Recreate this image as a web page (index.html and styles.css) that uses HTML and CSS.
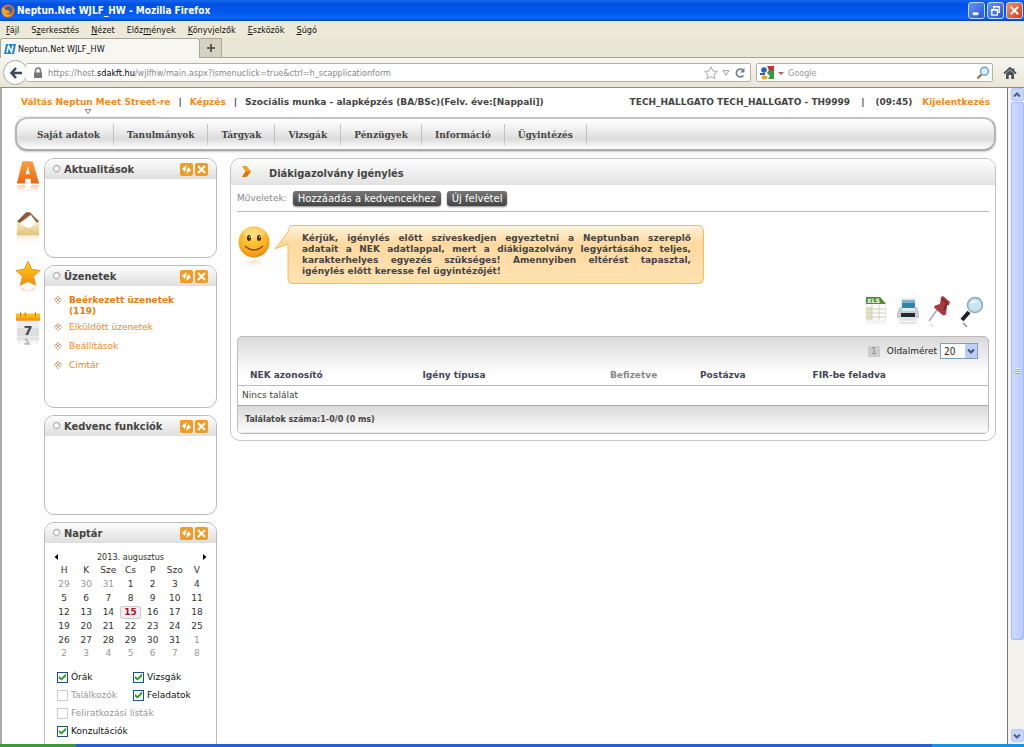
FILE: index.html
```html
<!DOCTYPE html>
<html lang="hu">
<head>
<meta charset="utf-8">
<title>Neptun.Net WJLF_HW - Mozilla Firefox</title>
<link rel="stylesheet" href="styles.css">
</head>
<body>
<svg class="defs" aria-hidden="true">
  <defs>
    <linearGradient id="orange" x1="0" y1="0" x2="0" y2="1"><stop offset="0" stop-color="#fba040"/><stop offset="1" stop-color="#ef6410"/></linearGradient>
    <linearGradient id="gold" x1="0" y1="0" x2="0" y2="1"><stop offset="0" stop-color="#ffd21f"/><stop offset="1" stop-color="#f58a0c"/></linearGradient>
    <linearGradient id="paper" x1="0" y1="0" x2="0" y2="1"><stop offset="0" stop-color="#f9ebbc"/><stop offset="1" stop-color="#e3c47c"/></linearGradient>
    <linearGradient id="bubble" x1="0" y1="0" x2="0" y2="1"><stop offset="0" stop-color="#fff3dc"/><stop offset=".3" stop-color="#ffd9a0"/><stop offset="1" stop-color="#ffe2b0"/></linearGradient>
    <linearGradient id="fade" x1="0" y1="0" x2="0" y2="1"><stop offset="0" stop-color="#f58a2c" stop-opacity=".45"/><stop offset="1" stop-color="#fff" stop-opacity="0"/></linearGradient>
    <linearGradient id="gfade" x1="0" y1="0" x2="0" y2="1"><stop offset="0" stop-color="#999" stop-opacity=".4"/><stop offset="1" stop-color="#fff" stop-opacity="0"/></linearGradient>
    <radialGradient id="face" cx=".45" cy=".3" r=".7"><stop offset="0" stop-color="#ffd84a"/><stop offset=".7" stop-color="#fbad1d"/><stop offset="1" stop-color="#ee8a10"/></radialGradient>
    <symbol id="refresh" viewBox="0 0 13 13"><rect width="13" height="13" rx="2" fill="#f39a22"/><path d="M7 2 2 5.500 5 9.500V7.500H6.500V5H6zM6 11l5-3.500L8 3.500V5.500H6.500V8H7z" fill="#fff"/><path d="M6.800 4.500 5.800 8.500" stroke="#f39a22"/></symbol>
    <symbol id="close" viewBox="0 0 13 13"><rect width="13" height="13" rx="2" fill="#f39a22"/><path d="M3 3 10 10M10 3 3 10" stroke="#fff" stroke-width="2"/></symbol>
    <symbol id="dot" viewBox="0 0 10 10"><circle cx="4.500" cy="4.500" r="3" fill="#fff" stroke="#b5b5b5" stroke-width="1.300"/><path d="M3 8.600Q8.500 9 8.600 3" fill="none" stroke="#d5d5d5"/></symbol>
    <symbol id="diamond" viewBox="0 0 9 9"><g fill="none" stroke="#a85f22" stroke-dasharray="1.200 .6"><path d="M4.500.5 8.500 4.500 4.500 8.500.5 4.500z"/><path d="M2.500 2.500 6.500 6.500M6.500 2.500 2.500 6.500"/></g></symbol>
  </defs>
</svg>

<header class="titlebar">
  <svg class="i14" viewBox="0 0 14 14"><circle cx="7" cy="7" r="6.500" fill="#e8731a"/><circle cx="7.500" cy="6" r="3.800" fill="#3a5fa8"/><path d="M1 3.500Q4 4 5 6q3 0 4 2-2 2-4 1 2 3 6 1-3 4-7 2.500Q-.5 9.500 1 3.500" fill="#f9a31c"/></svg>
  <h1>Neptun.Net WJLF_HW - Mozilla Firefox</h1>
  <button class="win" aria-label="Kis méret"><svg viewBox="0 0 16 16"><path d="M4 11.500h6" stroke="#fff" stroke-width="3"/></svg></button>
  <button class="win" aria-label="Előző méret"><svg viewBox="0 0 16 16"><path d="M6 6V4h6v6h-2M4 7h6v6H4zM4 7.500h6M6 4h6" fill="none" stroke="#fff" stroke-width="1.400"/></svg></button>
  <button class="win win-close" aria-label="Bezárás"><svg viewBox="0 0 16 16"><path d="m4 4 8 8M12 4l-8 8" stroke="#fff" stroke-width="2"/></svg></button>
</header>
<nav class="menubar">
  <button><u>F</u>ájl</button><button>S<u>z</u>erkesztés</button><button><u>N</u>ézet</button><button>Előz<u>m</u>ények</button><button><u>K</u>önyvjelzők</button><button><u>E</u>szközök</button><button><u>S</u>úgó</button>
</nav>
<div class="tabs">
  <div class="tab"><svg class="i12" viewBox="0 0 12 12"><path d="M2 1h10l-2 10H0z" fill="#2b84c4"/><path d="M3 9.500 4.500 3l3 6L9 2.500" fill="none" stroke="#fff" stroke-width="1.500"/></svg><span>Neptun.Net WJLF_HW</span></div>
  <button class="newtab" aria-label="Új lap"><svg class="i12" viewBox="0 0 12 12"><path d="M6 2v8M2 6h8" stroke="#444" stroke-width="1.600"/></svg></button>
</div>
<div class="navbar">
  <button class="back" aria-label="Vissza"><svg class="i14" viewBox="0 0 14 14"><path d="M7 2 2.500 7 7 12M3 7h10" fill="none" stroke="#3c4a58" stroke-width="2.600"/></svg></button>
  <div class="field url">
    <svg class="i12" viewBox="0 0 12 12"><path d="M3.500 6V3.500a2.500 2.500 0 0 1 5 0V6" fill="none" stroke="#777" stroke-width="1.500"/><rect x="2" y="5.500" width="8" height="5.500" fill="#777"/></svg>
    <p>https://host.<b>sdakft.hu</b>/wjlfhw/main.aspx?ismenuclick=true&amp;ctrl=h_scapplicationform</p>
    <svg class="i14" viewBox="0 0 14 14"><path d="m7 .8 1.900 4.200 4.500.4-3.400 3 1 4.500-4-2.400-4 2.400 1-4.500-3.400-3L5.100 5z" fill="#fff" stroke="#aaa"/></svg>
    <svg class="i8" viewBox="0 0 8 8"><path d="M1 1.500h6L4 6.500z" fill="#eee" stroke="#aaa"/></svg>
    <svg class="i12" viewBox="0 0 12 12"><path d="M9.500 8.500A4 4 0 1 1 9.500 3.500" fill="none" stroke="#6e7f8f" stroke-width="1.600"/><path d="M10.500 1v4.500H6z" fill="#6e7f8f"/></svg>
  </div>
  <div class="field search">
    <svg class="i14" viewBox="0 0 14 14"><path d="M7 0h7v13H8l2-3-3-3 2-3z" fill="#2e9b47"/><path d="M8 0h6v4.500H9z" fill="#d42c2c"/><circle cx="4" cy="4" r="2.800" fill="#2c62b8"/><ellipse cx="4.500" cy="11.500" rx="3" ry="1.900" fill="#f2a51d"/><path d="M0 8h5" stroke="#2c62b8" stroke-width="2"/></svg>
    <svg class="i6" viewBox="0 0 6 6"><path d="M0 2h6L3 5z" fill="#a66"/></svg>
    <input type="text" placeholder="Google" aria-label="Keresés">
    <svg class="i14" viewBox="0 0 14 14"><path d="M5.500 8.500 1.500 12.500" stroke="#a87446" stroke-width="2.400"/><circle cx="8.500" cy="5.200" r="4" fill="#d8ecfb" stroke="#6c9fd2" stroke-width="1.400"/></svg>
  </div>
  <button class="home" aria-label="Kezdőlap"><svg class="i14" viewBox="0 0 14 14"><path d="M1 7.500 7 2l6 5.500M10.500 2.500v3" fill="none" stroke="#4a4f55" stroke-width="1.800"/><path d="M3 7.500 7 4l4 3.500V13H8.300V9H5.700v4H3z" fill="#4a4f55"/></svg></button>
</div>

<div class="viewport">
  <div class="page">
    <div class="topline">
      <a href="#" class="meet">Váltás Neptun Meet Street-re</a><span>|</span><a href="#">Képzés</a><span>|</span><span>Szociális munka - alapképzés (BA/BSc)(Felv. éve:[Nappali])</span>
      <span class="user">TECH_HALLGATO TECH_HALLGATO - TH9999</span><span>|</span><span class="clock">(09:45)</span><a href="#">Kijelentkezés</a>
    </div>
    <div class="handle"><svg class="i8" viewBox="0 0 8 8"><path d="M1 1.500h6L4 5.500z" fill="#fff" stroke="#888"/></svg></div>
    <nav class="mainmenu">
      <a href="#">Saját adatok</a><a href="#">Tanulmányok</a><a href="#">Tárgyak</a><a href="#">Vizsgák</a><a href="#">Pénzügyek</a><a href="#">Információ</a><a href="#">Ügyintézés</a>
    </nav>
    <div class="columns">
      <aside class="quick">
        <svg viewBox="0 0 28 40"><path d="M8 3h11l7 24h-9v-5h-6v5H2z" fill="url(#orange)"/><path d="m13.500 9-2 8h4.500l-2-8z" fill="#fff"/><path d="M2 29h9v4h6v-4h9l-3 10H5z" fill="url(#fade)"/></svg>
        <svg viewBox="0 0 28 40"><path d="M2 13 12 3h4l10 10-12 6z" fill="#8a5c3c"/><path d="m5 15 12-9 6 8-6 9z" fill="#fff" stroke="#e4dfd4" stroke-width=".6"/><path d="M2 13l11 7h3l10-7v15H2z" fill="url(#paper)"/><path d="m2 28 10-8 2 1 12 7" fill="none" stroke="#d9b86c" stroke-width=".6"/><path d="M2 29h24v9H2z" fill="url(#fade)" opacity=".4"/></svg>
        <svg viewBox="0 0 28 40"><path d="m14 1 4 8.500 9 1.300-7 6.500 2.300 9.400L14 22.500l-8.300 4.200L8 17.300 1 10.800l9-1.300z" fill="url(#gold)" stroke="#f0930f"/><path d="m6 29 8 3 8-3-2 8H9z" fill="url(#fade)"/></svg>
        <svg viewBox="0 0 28 40"><path d="M2 5h24v22H2z" fill="#eee"/><path d="M2 18h24v9H2z" fill="#dedede"/><path d="M1 2h26v8H1z" fill="url(#gold)"/><path d="M6 1v4M11 1v4M22 1v4" stroke="#a96a12"/><text x="14" y="25" class="seven">7</text><path d="M2 28h24v10H2z" fill="url(#gfade)"/><path d="m11 29 4 6h-5" fill="none" stroke="#bbb" stroke-width="2"/></svg>
      </aside>

      <div class="widgets">
        <section class="panel">
          <header><svg class="i10"><use href="#dot"/></svg><h2>Aktualitások</h2><button aria-label="Frissítés"><svg><use href="#refresh"/></svg></button><button aria-label="Bezárás"><svg><use href="#close"/></svg></button></header>
          <div class="body low"></div>
        </section>
        <section class="panel">
          <header><svg class="i10"><use href="#dot"/></svg><h2>Üzenetek</h2><button aria-label="Frissítés"><svg><use href="#refresh"/></svg></button><button aria-label="Bezárás"><svg><use href="#close"/></svg></button></header>
          <ul class="body tall">
            <li class="unread"><svg class="i8"><use href="#diamond"/></svg><a href="#"><b>Beérkezett üzenetek (119)</b></a></li>
            <li><svg class="i8"><use href="#diamond"/></svg><a href="#">Elküldött üzenetek</a></li>
            <li><svg class="i8"><use href="#diamond"/></svg><a href="#">Beállítások</a></li>
            <li><svg class="i8"><use href="#diamond"/></svg><a href="#">Címtár</a></li>
          </ul>
        </section>
        <section class="panel">
          <header><svg class="i10"><use href="#dot"/></svg><h2>Kedvenc funkciók</h2><button aria-label="Frissítés"><svg><use href="#refresh"/></svg></button><button aria-label="Bezárás"><svg><use href="#close"/></svg></button></header>
          <div class="body low"></div>
        </section>
        <section class="panel">
          <header><svg class="i10"><use href="#dot"/></svg><h2>Naptár</h2><button aria-label="Frissítés"><svg><use href="#refresh"/></svg></button><button aria-label="Bezárás"><svg><use href="#close"/></svg></button></header>
          <div class="body calendar">
            <div class="month"><button aria-label="Előző hónap"><svg class="i6" viewBox="0 0 6 6"><path d="M5 0v6L1.500 3z"/></svg></button><span>2013. augusztus</span><button aria-label="Következő hónap"><svg class="i6" viewBox="0 0 6 6"><path d="M1 0v6l3.500-3z"/></svg></button></div>
            <table>
              <thead><tr><th>H</th><th>K</th><th>Sze</th><th>Cs</th><th>P</th><th>Szo</th><th>V</th></tr></thead>
              <tbody>
                <tr><td class="off">29</td><td class="off">30</td><td class="off">31</td><td>1</td><td>2</td><td>3</td><td>4</td></tr>
                <tr><td>5</td><td>6</td><td>7</td><td>8</td><td>9</td><td>10</td><td>11</td></tr>
                <tr><td>12</td><td>13</td><td>14</td><td><b class="today">15</b></td><td>16</td><td>17</td><td>18</td></tr>
                <tr><td>19</td><td>20</td><td>21</td><td>22</td><td>23</td><td>24</td><td>25</td></tr>
                <tr><td>26</td><td>27</td><td>28</td><td>29</td><td>30</td><td>31</td><td class="off">1</td></tr>
                <tr><td class="off">2</td><td class="off">3</td><td class="off">4</td><td class="off">5</td><td class="off">6</td><td class="off">7</td><td class="off">8</td></tr>
              </tbody>
            </table>
            <div class="filters">
              <label><input type="checkbox" checked><span>Órák</span></label><label><input type="checkbox" checked><span>Vizsgák</span></label>
              <label><input type="checkbox" disabled><span>Találkozók</span></label><label><input type="checkbox" checked><span>Feladatok</span></label>
              <label class="wide"><input type="checkbox" disabled><span>Feliratkozási listák</span></label>
              <label class="wide"><input type="checkbox" checked><span>Konzultációk</span></label>
            </div>
          </div>
        </section>
      </div>

      <main class="content">
        <header class="title"><svg class="i12" viewBox="0 0 12 12"><path d="M2 0h4.500L11 5.500 6.500 11H2l3.500-5.500z" fill="#f5a01c"/><path d="M2 11 5.500 5.500 11 5.500 6.500 11z" fill="#d97a0c"/></svg><h2>Diákigazolvány igénylés</h2></header>
        <div class="inner">
          <div class="actions"><span>Műveletek:</span><button>Hozzáadás a kedvencekhez</button><button>Új felvétel</button></div>
          <div class="notice">
            <svg class="smiley" viewBox="0 0 34 48"><circle cx="17" cy="17" r="15.500" fill="url(#face)"/><ellipse cx="17" cy="8" rx="11" ry="5.500" fill="#fff" opacity=".3"/><ellipse cx="12" cy="13" rx="2" ry="3" fill="#3e2c10"/><ellipse cx="22" cy="13" rx="2" ry="3" fill="#3e2c10"/><circle cx="12.600" cy="12" r=".8" fill="#fff"/><circle cx="22.600" cy="12" r=".8" fill="#fff"/><path d="M8 21q9 8 18 0" fill="none" stroke="#8a4a10" stroke-width="1.600"/><path d="M4 44q5-9 13-9t13 9z" fill="url(#fade)" opacity=".6"/></svg>
            <svg class="tail" viewBox="0 0 18 59"><path d="M18 .5Q15 .5 14 7L1 24l13-5v34q0 5.500 4 5.500z" fill="url(#bubble)"/><path d="M18 .5Q15 .5 14 7L1 24l13-5v34q0 5.500 4 5.500" fill="none" stroke="#f5bc55"/></svg>
            <p><span>Kérjük, igénylés előtt szíveskedjen egyeztetni a Neptunban szereplő</span> <span>adatait a NEK adatlappal, mert a diákigazolvány legyártásához teljes,</span> <span>karakterhelyes egyezés szükséges! Amennyiben eltérést tapasztal,</span> igénylés előtt keresse fel ügyintézőjét!</p>
          </div>
          <div class="tools">
            <button aria-label="Exportálás"><svg viewBox="0 0 24 34"><path d="M2 3h14l6 6v18H2z" fill="#fafafa" stroke="#ddd" stroke-width=".6"/><path d="M2 3h14l6 7H2z" fill="#548b3c"/><text x="3" y="9" class="xls">XLS</text><path d="M2 13h6v13H2z" fill="#dfe8c0"/><path d="M2 15h20M2 19h20M2 23h20M8 11v15M15 11v15" stroke="#ccc8b4" stroke-width=".8"/><path d="M2 28h20v5H2z" fill="url(#gfade)" opacity=".5"/></svg></button>
            <button aria-label="Nyomtatás"><svg viewBox="0 0 24 34"><path d="M5 4h14v13H5z" fill="#e8eaec"/><path d="M6 6h13v8H6z" fill="#2f86a6"/><path d="M6 6h13v3H6z" fill="#79b4c8"/><path d="M4 13h2v4h13v-4h2l2 5v6H1v-6z" fill="#c7ccd2"/><path d="M5 19h14v4H5z" fill="#252a30"/><path d="M4 23h16l1 4H3z" fill="#e2e5e8"/><path d="M3 28h18l-2 5H5z" fill="url(#gfade)"/></svg></button>
            <button aria-label="Rögzítés"><svg viewBox="0 0 24 34"><path d="M9 16 1 27" stroke="#aaa" stroke-width="1.500"/><path d="m13 3 2-1 7 6-1 3-2 .5-1 9-3 1-9-8 1-2 5-1.500z" fill="#a83a40"/><path d="m14 5 5 4-3 7" fill="none" stroke="#7a2228" stroke-width="1.500"/><path d="m2 30 4 3" stroke="#ddd" stroke-width="1.500"/></svg></button>
            <button aria-label="Keresés"><svg viewBox="0 0 24 34"><path d="M9 18 2 26" stroke="#222" stroke-width="4"/><circle cx="15" cy="11" r="7.500" fill="#c5e4f0" stroke="#8ba7b4" stroke-width="1.500"/><path d="M10 10q3-6 9-2-4 0-9 2" fill="#fff" opacity=".8"/><path d="m3 29 4 4" stroke="#aaa" stroke-width="2"/></svg></button>
          </div>
          <div class="grid">
            <div class="pager"><span class="pageno">1</span><label for="size">Oldalméret</label><span class="pick"><select id="size"><option>20</option></select><svg viewBox="0 0 12 14"><rect width="12" height="14" rx="1" fill="#bccdf6"/><path d="M3 5.500 6 8.500 9 5.500" fill="none" stroke="#3b5685" stroke-width="2"/></svg></span></div>
            <table class="results">
              <thead><tr><th class="c1">NEK azonosító</th><th class="c2">Igény típusa</th><th class="c3">Befizetve</th><th class="c4">Postázva</th><th>FIR-be feladva</th></tr></thead>
              <tbody><tr><td colspan="5">Nincs találat</td></tr></tbody>
              <tfoot><tr><td colspan="5">Találatok száma:1-0/0 (0 ms)</td></tr></tfoot>
            </table>
          </div>
        </div>
      </main>
    </div>
  </div>
  <div class="scroll"><button aria-label="Fel"><svg viewBox="0 0 10 10"><path d="M2 6.500 5 3.500 8 6.500" fill="none" stroke="#4d6185" stroke-width="2"/></svg></button><div class="track"><div class="thumb"><i></i></div></div><button aria-label="Le"><svg viewBox="0 0 10 10"><path d="M2 3.500 5 6.500 8 3.500" fill="none" stroke="#4d6185" stroke-width="2"/></svg></button></div>
</div>
<div class="taskbar"></div>
</body>
</html>
```
FILE: styles.css
```css
* { box-sizing: border-box; }
body, h1, h2, p, ul { margin: 0; padding: 0; }
body {
  display: flex;
  flex-direction: column;
  height: 100vh;
  overflow: hidden;
  background: #fff;
  color: #444;
  font: 10px "DejaVu Sans", sans-serif;
}
button, input, select { font: inherit; color: inherit; margin: 0; padding: 0; border: 0; background: none; }
svg { display: block; flex: none; }
a { color: #f28a1c; text-decoration: none; }
.defs { position: absolute; width: 0; height: 0; }
.i6 { width: 6px; height: 6px; }
.i8 { width: 8px; height: 8px; }
.i10 { width: 10px; height: 10px; }
.i12 { width: 12px; height: 12px; }
.i14 { width: 14px; height: 14px; }

.titlebar {
  display: flex;
  flex: none;
  align-items: center;
  gap: 2px;
  height: 21px;
  padding: 0 1px;
  background: linear-gradient(#1668f0, #0050e0 20%, #0058ee 60%, #0a66ff 85%, #0040c0);
}
.titlebar h1 { flex: 1; font: bold 10px "DejaVu Sans Condensed", sans-serif; color: #fff; }
.win { width: 17px; height: 17px; border: 1px solid #c8d8fa; border-radius: 3px; background: linear-gradient(135deg, #6d94f0, #2454d8); }
.win svg { width: 15px; height: 15px; }
.win-close { background: linear-gradient(135deg, #f0906c, #d03c14); }

.menubar { display: flex; flex: none; align-items: center; gap: 12px; height: 17px; padding: 0 6px; background: #ece9d8; color: #111; font: 9px "DejaVu Sans Condensed", sans-serif; }
.tabs { display: flex; flex: none; height: 20px; background: #e9e6d6; border-bottom: 1px solid #a9a695; }
.tab { display: flex; align-items: center; gap: 2px; width: 200px; height: 20px; padding-left: 3px; background: #f7f6f1; border: 1px solid #aaa798; border-bottom: 0; border-radius: 3px 3px 0 0; color: #111; font: 9px "DejaVu Sans Condensed", sans-serif; }
.newtab { display: grid; place-items: center; width: 22px; height: 19px; background: #d5d2c4; border: 1px solid #aaa798; border-width: 1px 1px 0 0; }
.navbar { display: flex; flex: none; align-items: center; gap: 5px; height: 30px; padding: 0 7px 0 3px; background: linear-gradient(#f7f6f1, #e9e6d6); border-bottom: 1px solid #8f8d80; }
.back { display: grid; place-items: center; width: 25px; height: 25px; border: 1px solid #aaa; border-radius: 50%; background: #fdfdfb; }
.field { display: flex; align-items: center; gap: 8px; height: 19px; padding: 0 4px; background: #fff; border: 1px solid #b5b3a6; border-radius: 2px; font: 9px "DejaVu Sans Condensed", sans-serif; }
.url { flex: 1; margin-left: -7px; padding-left: 6px; border-left: 0; gap: 4px; }
.url p { flex: 1; color: #888; }
.url b { font-weight: normal; color: #000; }
.search { width: 237px; gap: 4px; padding: 0 2px 0 3px; }
.search input { flex: 1; min-width: 0; outline: 0; }
.search input::placeholder { color: #999; opacity: 1; }
.home { margin-left: 5px; }

.viewport { display: flex; flex: 1; min-height: 0; }
.page { flex: 1; min-width: 0; overflow: hidden; border-left: 2px solid #aaa; border-right: 1px solid #777; padding: 0 11px 0 13px; }
.topline { display: flex; align-items: center; gap: 8px; height: 20px; padding: 7px 6px 0; font-weight: bold; font-size: 9px; white-space: nowrap; }
.user { margin-left: auto; margin-right: 3px; }
.clock { margin: 0 2px 0 3px; }
.handle { display: flex; justify-content: center; width: 146px; height: 9px; border-bottom: 1px solid #eee; }
.mainmenu {
  display: flex;
  align-items: center;
  height: 34px;
  padding-left: 7px;
  border: 2px solid #bbb;
  border-color: #c2c2c2 #b5b5b5 #aaa;
  border-radius: 12px;
  background: linear-gradient(#fff, #ededed 40%, #dcdcdc 65%, #fff);
  box-shadow: 0 1px 2px #ccc;
}
.mainmenu a { padding: 5px 13px; border-right: 1px solid #c5c5c5; color: #444; font: bold 10px "DejaVu Serif Condensed", serif; }

.columns { display: flex; align-items: flex-start; padding-top: 7px; }
.quick { display: flex; flex-direction: column; gap: 13px; width: 29px; flex: none; }
.quick svg { width: 26px; height: 38px; }
.seven { font: bold 14px "DejaVu Sans", sans-serif; fill: #444; text-anchor: middle; }
.widgets { display: flex; flex-direction: column; gap: 7px; width: 173px; flex: none; }
.panel { border: 1px solid #bbb; border-radius: 10px; overflow: hidden; }
.panel header { display: flex; align-items: center; gap: 2px; height: 20px; padding: 0 8px 0 7px; background: linear-gradient(#fdfdfd, #dedede); }
.panel h2 { flex: 1; font: bold 11px "DejaVu Sans Condensed", sans-serif; color: #444; }
.panel button svg { width: 13px; height: 13px; }
.low { height: 78px; }
.tall { height: 121px; padding: 9px 20px 0 9px; list-style: none; }
.tall li { display: flex; gap: 7px; margin-bottom: 8px; font-size: 9px; line-height: 11px; }
.tall .unread { margin-bottom: 5px; }
.tall .unread a { color: #ec7a0c; }
.tall li svg { margin-top: 1px; }
.calendar { padding: 8px 8px; height: 300px; color: #333; font-size: 9px; }
.month { display: flex; justify-content: space-between; align-items: center; height: 12px; font: 9px "DejaVu Sans Condensed", sans-serif; }
.panel .month button svg { width: 6px; height: 6px; }
.calendar table { width: 100%; table-layout: fixed; border-collapse: collapse; margin-top: 1px; }
.calendar th, .calendar td { height: 14px; padding: 0; line-height: 11px; text-align: center; font-weight: normal; }
.calendar th, .calendar tr:last-child td { height: 13px; }
.calendar .off { color: #999; }
.calendar .today { display: block; margin: 0 2px; color: #a8121c; border-radius: 2px; background: #f0f0f0; box-shadow: 0 0 0 1px #ccc; }
.filters { display: grid; grid-template-columns: 76px 1fr; padding: 8px 0 0 4px; }
.filters label { display: flex; align-items: center; gap: 3px; height: 18px; color: #111; white-space: nowrap; }
.filters .wide { grid-column: span 2; }
.filters label:has(:disabled) { color: #999; }
.filters input { appearance: none; display: grid; place-items: center; flex: none; width: 11px; height: 11px; border: 1px solid #1c5180; background: #fff; }
.filters input:disabled { border-color: #ccc; }
.filters input:checked::before { content: ""; width: 7px; height: 7px; background: #21a121; clip-path: polygon(0 35%, 35% 65%, 100% 0, 100% 40%, 35% 100%, 0 70%); }

.content { flex: 1; min-width: 0; margin-left: 13px; border: 1px solid #c5c5c5; border-radius: 10px; overflow: hidden; }
.title { display: flex; align-items: center; gap: 17px; height: 26px; padding-left: 9px; background: linear-gradient(#fefefe, #e2e2e2); }
.title h2 { padding-top: 3px; font: bold 11px "DejaVu Sans Condensed", sans-serif; color: #444; }
.inner { padding: 0 6px 6px; }
.actions { display: flex; align-items: center; gap: 6px; height: 27px; border-bottom: 1px solid #bbb; color: #888; font-size: 9px; }
.actions button { height: 15px; padding: 0 5px; border-radius: 3px; background: linear-gradient(#777, #444); box-shadow: 0 1px 2px #888; color: #fff; font: 10px "DejaVu Sans", sans-serif; }
.notice { display: flex; align-items: flex-start; padding-top: 13px; }
.smiley { width: 34px; height: 48px; }
.tail { width: 18px; height: 59px; margin-left: 3px; }
.notice p { width: 412px; min-height: 59px; padding: 7px 12px 6px 10px; border: 1px solid #f5bc55; border-left: 0; border-radius: 0 6px 6px 0; background: linear-gradient(#fff3dc, #ffd9a0 30%, #ffe2b0); font-weight: bold; font-size: 9px; line-height: 11px; }
.notice span { display: block; text-align-last: justify; }
.tools { display: flex; justify-content: flex-end; gap: 8px; padding: 10px 5px 8px; }
.tools svg { width: 24px; height: 34px; }
.xls { font: bold 6px "DejaVu Sans", sans-serif; fill: #fff; }
.grid { border: 1px solid #bbb; border-radius: 5px; overflow: hidden; background: linear-gradient(#d9d9d9, #fff 36px); }
.pager { display: flex; justify-content: flex-end; align-items: center; height: 28px; padding-right: 10px; color: #222; font-size: 9px; }
.pageno { width: 12px; margin-right: 7px; background: #ccc; color: #888; text-align: center; line-height: 11px; }
.pick { display: grid; width: 38px; height: 16px; margin-left: 3px; border: 1px solid #7f9db9; background: #fff; }
.pick > * { grid-area: 1 / 1; }
.pick select { appearance: none; width: 100%; height: 14px; padding-left: 3px; font: 10px "DejaVu Sans Condensed", sans-serif; }
.pick svg { width: 12px; height: 14px; justify-self: end; pointer-events: none; }
.results { width: 100%; table-layout: fixed; border-collapse: collapse; font-size: 9px; text-align: left; }
.results th { height: 20px; padding: 0 0 0 12px; border-bottom: 1px solid #bbb; color: #445; }
.results .c1 { width: 23%; }
.results .c2 { width: 25%; }
.results .c3 { width: 12%; color: #888; }
.results .c4 { width: 15%; }
.results tbody td { height: 20px; padding: 0 4px; background: #fff; }
.results tfoot td { height: 28px; padding: 0 7px; border-top: 1px solid #aaa; background: linear-gradient(#d9d9d9, #fcfcfc); font: bold 8px "DejaVu Sans", sans-serif; }

.scroll { display: flex; flex-direction: column; gap: 1px; width: 16px; padding: 0 0 2px 3px; background: #f3f2ec; }
.scroll button { height: 13px; border: 1px solid #b4c8f4; border-radius: 2px; background: #c8d6fb; }
.scroll button svg { width: 10px; height: 10px; }
.track { flex: 1; }
.thumb { display: grid; place-items: center; height: 86%; border: 1px solid #a5bcf0; border-radius: 2px; background: linear-gradient(90deg, #cbdafd, #b9cbf8); }
.thumb i { width: 5px; height: 6px; background: repeating-linear-gradient(#eef4ff 0 1px, #8ca6e0 1px 2px); }
.taskbar { flex: none; height: 3px; background: linear-gradient(90deg, #3c9a3c 76px, #245edb 76px 91%, #0f96e8 91%); }
```
